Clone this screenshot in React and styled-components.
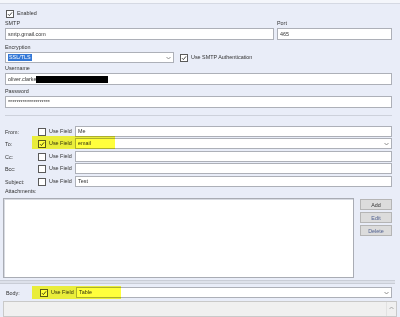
import React from "react";
import styled, { createGlobalStyle } from "styled-components";

const Global = createGlobalStyle`
  body {
    margin: 0;
    background: #e9edf8;
    font-family: "Liberation Sans", Arial, sans-serif;
    font-size: 5.4px;
    color: #333;
  }
`;

const Page = styled.div`
  width: 400px;
  height: 317px;
  overflow: hidden;
  display: flex;
  flex-direction: column;
  & > * {
    flex-shrink: 0;
  }
`;

const TopEdge = styled.div`
  height: 3px;
  background: #f4f6fb;
  border-bottom: 1px solid #d5d9e3;
`;

const Section = styled.div`
  display: flex;
  flex-direction: column;
  padding: 0 8px 0 5px;
`;

const Row = styled.div`
  display: flex;
  align-items: ${(p) => (p.stretch ? "stretch" : "center")};
  gap: ${(p) => p.gap || 0}px;
  margin-top: ${(p) => p.mt || 0}px;
  height: ${(p) => p.h || 11}px;
  flex: none;
  position: relative;
`;

const Box = styled.span`
  width: 6px;
  height: 6px;
  border: 1px solid #5a5a5a;
  background: #fff;
  display: inline-flex;
  align-items: center;
  justify-content: center;
  flex: none;
  margin-left: ${(p) => p.ml || 0}px;
  margin-right: 3px;
`;

const Text = styled.span`
  white-space: nowrap;
  line-height: 7px;
`;

const Field = styled.div`
  display: flex;
  flex-direction: column;
  flex: ${(p) => (p.grow ? "1 1 0" : "none")};
  width: ${(p) => (p.w ? p.w + "px" : "auto")};
  margin-top: ${(p) => p.mt || 0}px;
`;

const Label = styled.div`
  height: 7px;
  line-height: 7px;
  margin-bottom: 1px;
  white-space: nowrap;
  flex: none;
`;

const Input = styled.div`
  box-sizing: border-box;
  height: ${(p) => p.h || 12}px;
  width: ${(p) => (p.w ? p.w + "px" : "auto")};
  flex: ${(p) => (p.grow ? "1 1 0" : "none")};
  background: #fff;
  border: 1px solid #adb0b8;
  display: flex;
  align-items: center;
  padding: 0 2px;
  white-space: nowrap;
  overflow: hidden;
`;

const Selected = styled.span`
  background: #3478d7;
  color: #fff;
  padding: 0 1px;
  line-height: 7px;
`;

const Redact = styled.span`
  display: inline-block;
  width: 72px;
  height: 7px;
  background: #000;
`;

const Arrow = styled.svg`
  margin-left: auto;
  flex: none;
`;

const Separator = styled.div`
  height: 1px;
  background: #cdd1db;
  margin-top: ${(p) => p.mt || 0}px;
  margin-bottom: ${(p) => p.mb || 0}px;
`;

const RowLabel = styled.div`
  width: ${(p) => p.w || 33}px;
  flex: none;
  white-space: nowrap;
`;

const UseField = styled.div`
  width: 37px;
  flex: none;
  display: flex;
  align-items: center;
`;

const Highlight = styled.div`
  position: absolute;
  left: ${(p) => p.l}px;
  top: ${(p) => p.t}px;
  width: ${(p) => p.w}px;
  height: ${(p) => p.h}px;
  background: #ffff3c;
  mix-blend-mode: multiply;
  pointer-events: none;
`;

const AttachRow = styled.div`
  display: flex;
  padding: 0 8px 0 3px;
  gap: 6px;
`;

const Area = styled.div`
  flex: 1;
  height: 80px;
  box-sizing: border-box;
  background: #fff;
  border: 1px solid #a9acb4;
  box-shadow: inset 1px 1px 0 #d8dbe2;
`;

const Buttons = styled.div`
  display: flex;
  flex-direction: column;
  gap: 2px;
  width: 32px;
  padding-top: 1px;
`;

const Button = styled.div`
  height: 11px;
  box-sizing: border-box;
  background: #dcdcdc;
  border: 1px solid #b5b5b5;
  display: flex;
  align-items: center;
  justify-content: center;
  color: ${(p) => (p.disabled ? "#4f5f8f" : "#333")};
`;

const Splitter = styled.div`
  height: 2px;
  margin-top: 2px;
  margin-right: 5px;
  background: #dde1ea;
  border-top: 1px solid #c9cdd6;
  border-bottom: 1px solid #c9cdd6;
`;

const BodySection = styled.div`
  padding: 0 8px 0 6px;
`;

const Panel = styled.div`
  flex: 1 1 auto !important;
  margin: 3px 3px 0 3px;
  background: #f0f0f0;
  border: 1px solid #c9c9c9;
  display: flex;
  justify-content: flex-end;
`;

const Scroll = styled.div`
  width: 9px;
  border-left: 1px solid #e2e2e2;
  display: flex;
  justify-content: center;
  padding-top: 4px;
`;

const Check = () => (
  <svg width="6" height="6" viewBox="0 0 6 6">
    <path d="M1 3.2 L2.4 4.6 L5 1.4" stroke="#333" strokeWidth="0.9" fill="none" />
  </svg>
);

const Chevron = () => (
  <Arrow width="5" height="4" viewBox="0 0 5 4">
    <path d="M0.5 1 L2.5 3 L4.5 1" stroke="#777" strokeWidth="0.8" fill="none" />
  </Arrow>
);

const mailRows = [
  { label: "From:", checked: false, value: "Me", mt: 0 },
  { label: "To:", checked: true, value: "email", mt: 1, select: true, mark: true },
  { label: "Cc:", checked: false, value: "", mt: 2 },
  { label: "Bcc:", checked: false, value: "", mt: 1 },
  { label: "Subject:", checked: false, value: "Test", mt: 2 },
];

export default function App() {
  return (
    <Page>
      <Global />
      <TopEdge />
      <Section>
        <Row mt={6} h={7}>
          <Box ml={1}><Check /></Box>
          <Text>Enabled</Text>
        </Row>

        <Row mt={3} h={20} stretch gap={3}>
          <Field grow>
            <Label>SMTP</Label>
            <Input>smtp.gmail.com</Input>
          </Field>
          <Field w={115}>
            <Label>Port</Label>
            <Input>465</Input>
          </Field>
        </Row>

        <Field mt={4}>
          <Label>Encryption</Label>
          <Row h={11}>
            <Input w={169} h={11}>
              <Selected>SSL/TLS</Selected>
              <Chevron />
            </Input>
            <Box ml={6}><Check /></Box>
            <Text>Use SMTP Authentication</Text>
          </Row>
        </Field>

        <Field mt={2}>
          <Label>Username</Label>
          <Input>
            <Text>oliver.clarke</Text>
            <Redact />
          </Input>
        </Field>

        <Field mt={3}>
          <Label>Password</Label>
          <Input>
            <Text>********************</Text>
          </Input>
        </Field>

        <Separator mt={7} mb={10} />

        {mailRows.map((r) => (
          <Row key={r.label} mt={r.mt} h={11}>
            <RowLabel>{r.label}</RowLabel>
            <UseField>
              <Box>{r.checked && <Check />}</Box>
              <Text>Use Field</Text>
            </UseField>
            <Input grow h={11}>
              <Text>{r.value}</Text>
              {r.select && <Chevron />}
            </Input>
            {r.mark && <Highlight l={27} t={-2} w={83} h={13} />}
          </Row>
        ))}

        <Label style={{ marginTop: 1, marginBottom: 3 }}>Attachments:</Label>
      </Section>

      <AttachRow>
        <Area />
        <Buttons>
          <Button>Add</Button>
          <Button disabled>Edit</Button>
          <Button disabled>Delete</Button>
        </Buttons>
      </AttachRow>

      <Splitter />

      <BodySection>
        <Row mt={3} h={11}>
          <RowLabel>Body:</RowLabel>
          <UseField>
            <Box ml={1}><Check /></Box>
            <Text>Use Field</Text>
          </UseField>
          <Input grow h={11}>
            <Text>Table</Text>
            <Chevron />
          </Input>
          <Highlight l={26} t={-1} w={89} h={13} />
        </Row>
      </BodySection>

      <Panel>
        <Scroll>
          <svg width="5" height="4" viewBox="0 0 5 4">
            <path d="M0.5 3 L2.5 1 L4.5 3" stroke="#999" strokeWidth="0.8" fill="none" />
          </svg>
        </Scroll>
      </Panel>
    </Page>
  );
}
